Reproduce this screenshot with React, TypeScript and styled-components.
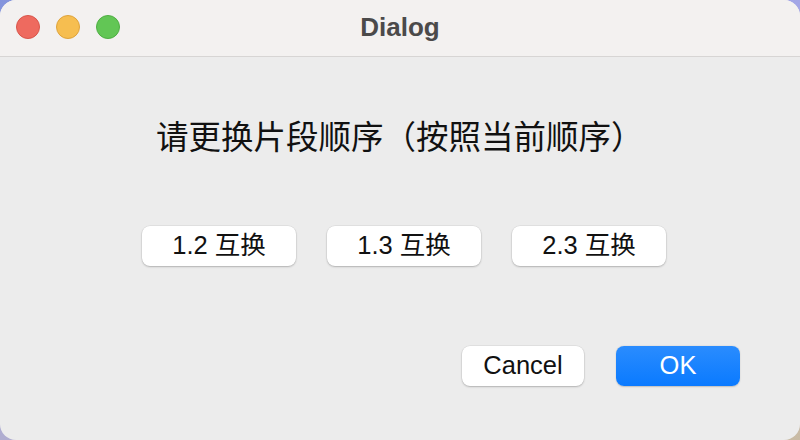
import React from "react";
import styled, { createGlobalStyle } from "styled-components";

const Global = createGlobalStyle`
  html, body {
    margin: 0;
    padding: 0;
    width: 800px;
    height: 440px;
    overflow: hidden;
    background: linear-gradient(160deg, #8494dc 0%, #a3a6e6 40%, #c9bba4 100%);
  }
  * { box-sizing: border-box; }
`;

const Window = styled.div`
  width: 800px;
  height: 440px;
  border-radius: 16px;
  overflow: hidden;
  display: flex;
  flex-direction: column;
  background: #ececec;
  font-family: "Liberation Sans", "Noto Sans CJK SC", Arial, sans-serif;
`;

const TitleBar = styled.div`
  height: 57px;
  flex: none;
  display: grid;
  grid-template-columns: 1fr auto 1fr;
  align-items: center;
  background: #f3f1f0;
  border-bottom: 1px solid #d7d5d4;
`;

const Lights = styled.div`
  display: flex;
  gap: 16px;
  padding-left: 16px;
  margin-top: -2px;
`;

const Light = styled.span<{ $fill: string; $edge: string }>`
  width: 24px;
  height: 24px;
  border-radius: 50%;
  background: ${(p) => p.$fill};
  border: 1px solid ${(p) => p.$edge};
`;

const Title = styled.div`
  font-family: "Liberation Sans", Arial, sans-serif;
  font-weight: bold;
  font-size: 26px;
  color: #4b4a4a;
  margin-top: -2px;
`;

const Body = styled.div`
  flex: 1;
  display: flex;
  flex-direction: column;
`;

const Heading = styled.div`
  margin-top: 58px;
  padding-left: 156px;
  height: 40px;
  line-height: 40px;
  font-family: "Noto Sans CJK SC", sans-serif;
  font-size: 32.5px;
  color: #111;
  white-space: nowrap;
`;

const SwapRow = styled.div`
  margin-top: 71px;
  padding-left: 142px;
  display: flex;
  gap: 31px;
`;

const Button = styled.button<{ $w: number; $primary?: boolean }>`
  width: ${(p) => p.$w}px;
  height: 40px;
  border-radius: 8px;
  border: none;
  padding: 0;
  display: flex;
  align-items: center;
  justify-content: center;
  font-family: "Liberation Sans", "Noto Sans CJK SC", Arial, sans-serif;
  font-size: 25.5px;
  line-height: 1;
  color: ${(p) => (p.$primary ? "#ffffff" : "#111")};
  background: ${(p) =>
    p.$primary ? "linear-gradient(#2a8cfe, #0a7aff)" : "#ffffff"};
  box-shadow: ${(p) =>
    p.$primary
      ? "0 0.5px 1.5px rgba(0,0,0,0.2)"
      : "0 0 0 0.5px rgba(0,0,0,0.08), 0 1px 2px rgba(0,0,0,0.22)"};
`;

const Footer = styled.div`
  margin-top: 80px;
  padding-right: 60px;
  display: flex;
  justify-content: flex-end;
  gap: 32px;
`;

export default function App() {
  return (
    <>
      <Global />
      <Window>
        <TitleBar>
          <Lights>
            <Light $fill="#ee6a5f" $edge="#d8564b" />
            <Light $fill="#f6be50" $edge="#dea33c" />
            <Light $fill="#62c655" $edge="#4fae43" />
          </Lights>
          <Title>Dialog</Title>
          <div />
        </TitleBar>
        <Body>
          <Heading>请更换片段顺序（按照当前顺序）</Heading>
          <SwapRow>
            <Button $w={154}>1.2 互换</Button>
            <Button $w={154}>1.3 互换</Button>
            <Button $w={154}>2.3 互换</Button>
          </SwapRow>
          <Footer>
            <Button $w={122}>Cancel</Button>
            <Button $w={124} $primary>
              OK
            </Button>
          </Footer>
        </Body>
      </Window>
    </>
  );
}
